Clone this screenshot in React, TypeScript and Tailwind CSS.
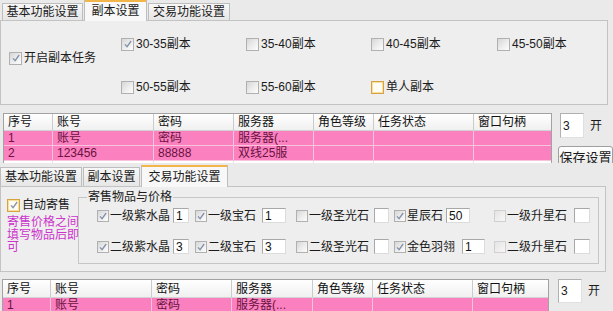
import React from "react";

const cols = ["序号", "账号", "密码", "服务器", "角色等级", "任务状态", "窗口句柄"];

function Box({ checked, hover, faint, small }: { checked?: boolean; hover?: boolean; faint?: boolean; small?: boolean }) {
  const size = small ? "h-[12px] w-[12px]" : "h-[13px] w-[13px]";
  let tone = "border-[#b0b0b0] bg-linear-to-br from-[#d6d6d6] via-[#ececec] to-[#fdfdfd]";
  if (faint) tone = "border-[#d0d0d0] bg-linear-to-br from-[#e4e4e4] to-[#f7f7f7]";
  if (hover) tone = "border-[#d6a243] bg-[#fffdf3] shadow-[inset_0_0_0_1px_#f8df9a]";
  return (
    <span className={`flex shrink-0 items-center justify-center border ${size} ${tone}`}>
      {checked && (
        <svg viewBox="0 0 12 12" className="h-[10px] w-[10px]">
          <path d="M2.4 6.4 L4.9 9.2 L9.8 2.4" fill="none" stroke="#8592ab" strokeWidth="1.6" />
        </svg>
      )}
    </span>
  );
}

function Tabs({ tabs, active, bar, tall, short }: { tabs: { label: string; w: string }[]; active: number; bar: string; tall: string; short: string }) {
  return (
    <div className={`flex items-end gap-[1px] ${bar}`}>
      {tabs.map((t, i) =>
        i === active ? (
          <div key={t.label} className={`relative z-10 -mb-px flex flex-col border-x border-[#bdbdbd] bg-[#f8f8f8] ${tall} ${t.w}`}>
            <div className="h-[2px] bg-[#f2b54a]" />
            <div className="flex flex-1 items-center justify-center pb-[1px]">{t.label}</div>
          </div>
        ) : (
          <div key={t.label} className={`flex items-center justify-center border border-b-0 border-[#bdbdbd] bg-linear-to-b from-[#f7f7f7] to-[#e6e6e6] ${short} ${t.w}`}>
            {t.label}
          </div>
        )
      )}
    </div>
  );
}

function Table({ widths, rows, head, height }: { widths: string[]; rows: string[][]; head: string; height: string }) {
  return (
    <div className={`flex flex-col overflow-hidden border border-[#a2a2a2] bg-white ${height}`}>
      <div className={`flex shrink-0 border-b border-[#d2d2d2] bg-linear-to-b from-white to-[#f0f0f0] text-[#111] ${head}`}>
        {cols.map((c, i) => (
          <div key={c} className={`flex items-center pl-[4px] ${widths[i]} ${i < 6 ? "border-r border-[#cbcbcb]" : ""}`}>
            {c}
          </div>
        ))}
      </div>
      {rows.map((r, ri) => (
        <div key={ri} className="flex h-[15px] shrink-0 border-b border-[#f7c4dc] bg-[#fb80bf] text-[#6a1240]">
          {r.map((v, i) => (
            <div key={i} className={`flex items-center pl-[4px] ${widths[i]} ${i < 6 ? "border-r border-[#f7c4dc]" : ""}`}>
              {v}
            </div>
          ))}
        </div>
      ))}
      <div className="flex flex-1">
        {cols.map((c, i) => (
          <div key={c} className={`${widths[i]} ${i < 6 ? "border-r border-[#e3e3e3]" : ""}`} />
        ))}
      </div>
    </div>
  );
}

function Field({ value, w }: { value: string; w: string }) {
  return (
    <span className={`flex h-[15px] shrink-0 items-center border border-[#a8a8a8] border-r-[#dcdcdc] border-b-[#dcdcdc] bg-white pl-[2px] text-[#111] ${w}`}>
      {value}
    </span>
  );
}

const dungeons = [
  { label: "30-35副本", checked: true },
  { label: "35-40副本" },
  { label: "40-45副本" },
  { label: "45-50副本" },
  { label: "50-55副本" },
  { label: "55-60副本" },
  { label: "单人副本", hover: true },
];

type Good = { label: string; checked?: boolean; faint?: boolean; value: string; gap: string; w: string };

const goods: Good[] = [
  { label: "一级紫水晶", checked: true, value: "1", gap: "ml-[3px]", w: "w-[16px]" },
  { label: "一级宝石", checked: true, value: "1", gap: "ml-[6px]", w: "w-[24px]" },
  { label: "一级圣光石", value: "", gap: "ml-[5px]", w: "w-[15px]" },
  { label: "星辰石", checked: true, value: "50", gap: "ml-[3px]", w: "w-[24px]" },
  { label: "一级升星石", faint: true, value: "", gap: "ml-[7px]", w: "w-[16px]" },
  { label: "二级紫水晶", checked: true, value: "3", gap: "ml-[3px]", w: "w-[16px]" },
  { label: "二级宝石", checked: true, value: "3", gap: "ml-[6px]", w: "w-[24px]" },
  { label: "二级圣光石", value: "", gap: "ml-[5px]", w: "w-[15px]" },
  { label: "金色羽翎", checked: true, value: "1", gap: "ml-[7px]", w: "w-[23px]" },
  { label: "二级升星石", faint: true, value: "", gap: "ml-[7px]", w: "w-[16px]" },
];

export default function App() {
  return (
    <div className="h-[311px] w-[613px] overflow-hidden bg-[#eaeaea] font-['Liberation_Sans','Noto_Sans_CJK_SC',sans-serif] text-[12px] leading-[14px] text-[#1b1b1b]">
      {/* top window: 副本设置 */}
      <div className="h-[163px] overflow-hidden">
        <Tabs
          bar="h-[20px] pl-[2px]"
          tall="h-[21px]"
          short="h-[17px]"
          active={1}
          tabs={[
            { label: "基本功能设置", w: "w-[81px]" },
            { label: "副本设置", w: "w-[63px]" },
            { label: "交易功能设置", w: "w-[82px]" },
          ]}
        />
        <div className="flex h-[85px] w-[608px] border border-[#c3c3c3] bg-[#eeeeee] pt-[16px]">
          <div className="w-[120px] shrink-0 pl-[8px] pt-[14px]">
            <label className="flex h-[14px] items-center gap-[2px]">
              <Box checked />
              <span>开启副本任务</span>
            </label>
          </div>
          <div className="grid grid-cols-[125px_125px_126px_auto] gap-y-[19px]">
            {dungeons.map((d) => (
              <label key={d.label} className="flex h-[14px] items-center gap-[2px]">
                <Box checked={d.checked} hover={d.hover} />
                <span>{d.label}</span>
              </label>
            ))}
          </div>
        </div>
        <div className="mt-[8px] flex">
          <div className="ml-[3px] shrink-0">
            <Table
              height="h-[60px]"
              head="h-[17px]"
              widths={["w-[49px]", "w-[101px]", "w-[80px]", "w-[80px]", "w-[60px]", "w-[100px]", "w-[77px]"]}
              rows={[
                ["1", "账号", "密码", "服务器(...", "", "", ""],
                ["2", "123456", "88888", "双线25服", "", "", ""],
              ]}
            />
          </div>
          <div className="ml-[6px] flex shrink-0 flex-col items-start">
            <div className="ml-[2px] flex items-center">
              <span className="flex h-[25px] w-[24px] items-center border border-[#b0b0b0] border-r-[#e0e0e0] border-b-[#e0e0e0] bg-white pl-[2px]">3</span>
              <span className="ml-[6px]">开</span>
            </div>
            <button className="mt-[8px] flex h-[24px] w-[55px] items-start justify-center rounded-[3px] border border-[#9f9f9f] bg-linear-to-b from-white to-[#e4e4e4] pt-[4px] text-[13px]">
              保存设置
            </button>
          </div>
        </div>
      </div>

      {/* bottom window: 交易功能设置 */}
      <div className="h-[148px] overflow-hidden">
        <Tabs
          bar="h-[23px]"
          tall="h-[22px]"
          short="h-[19px]"
          active={2}
          tabs={[
            { label: "基本功能设置", w: "w-[82px]" },
            { label: "副本设置", w: "w-[57px]" },
            { label: "交易功能设置", w: "w-[87px]" },
          ]}
        />
        <div className="flex h-[86px] w-[606px] border border-[#c3c3c3] bg-[#eeeeee]">
          <div className="w-[77px] shrink-0 pl-[6px] pt-[11px]">
            <label className="flex h-[14px] items-center gap-[2px]">
              <Box checked hover />
              <span>自动寄售</span>
            </label>
            <p className="mt-[4px] w-[74px] leading-[12.5px] text-[#cc33cc]">寄售价格之间填写物品后即可</p>
          </div>
          <div className="relative mt-[10px] h-[67px] w-[521px] shrink-0 border border-[#c6c6c6] pl-[18px] pt-[10px]">
            <span className="absolute -top-[8px] left-[8px] bg-[#eeeeee] px-[1px]">寄售物品与价格</span>
            <div className="grid grid-cols-[98px_101px_98px_100px_auto] gap-y-[16px]">
              {goods.map((g) => (
                <div key={g.label} className="flex h-[15px] items-center">
                  <Box checked={g.checked} faint={g.faint} small />
                  <span className="ml-[1px]">{g.label}</span>
                  <span className={g.gap}>
                    <Field value={g.value} w={g.w} />
                  </span>
                </div>
              ))}
            </div>
          </div>
        </div>
        <div className="mt-[7px] flex">
          <div className="ml-[2px] shrink-0">
            <Table
              height="h-[50px]"
              head="h-[18px]"
              widths={["w-[48px]", "w-[101px]", "w-[80px]", "w-[81px]", "w-[60px]", "w-[100px]", "w-[75px]"]}
              rows={[
                ["1", "账号", "密码", "服务器(...", "", "", ""],
                ["2", "123456", "88888", "双线25服", "", "", ""],
              ]}
            />
          </div>
          <div className="ml-[9px] flex shrink-0 items-center self-start">
            <span className="flex h-[24px] w-[24px] items-center border border-[#b0b0b0] border-r-[#e0e0e0] border-b-[#e0e0e0] bg-white pl-[2px]">3</span>
            <span className="ml-[6px]">开</span>
          </div>
        </div>
      </div>
    </div>
  );
}
